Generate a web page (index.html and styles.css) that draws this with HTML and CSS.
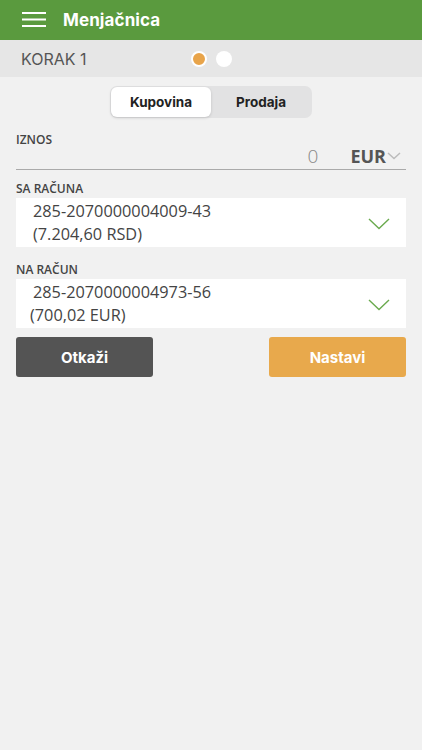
FILE: index.html
```html
<!DOCTYPE html>
<html lang="sr">
<head>
    <meta charset="UTF-8">
    <meta name="viewport" content="width=device-width, initial-scale=1.0">
    <title>Menjačnica</title>
    <link rel="stylesheet" href="styles.css">
</head>
<body>

    <header class="topbar">
        <svg class="menu-icon" width="24" height="16" viewBox="0 0 24 16">
            <rect x="0" y="0" width="24" height="2" fill="#fff"/>
            <rect x="0" y="6.5" width="24" height="2" fill="#fff"/>
            <rect x="0" y="13" width="24" height="2" fill="#fff"/>
        </svg>
        <h1 class="title">Menjačnica</h1>
    </header>

    <div class="stepbar">
        <span class="step-label">KORAK 1</span>
        <div class="dots">
            <span class="dot active"></span>
            <span class="dot"></span>
        </div>
    </div>

    <div class="segment-wrap">
        <div class="segment">
            <button class="seg-btn selected">Kupovina</button>
            <button class="seg-btn">Prodaja</button>
        </div>
    </div>

    <form class="exchange">
        <label class="field-label">IZNOS</label>
        <div class="amount-row">
            <span class="amount">0</span>
            <span class="currency">EUR</span>
            <svg class="currency-arrow" width="14" height="8" viewBox="0 0 14 8">
                <polyline points="1,1 7,6.5 13,1" fill="none" stroke="#bbb" stroke-width="1.5"/>
            </svg>
        </div>

        <label class="field-label">SA RAČUNA</label>
        <div class="account">
            <div class="account-text">
                <div>285-2070000004009-43</div>
                <div>(7.204,60 RSD)</div>
            </div>
            <svg class="account-arrow" width="22" height="12" viewBox="0 0 22 12">
                <polyline points="1,1 11,10.5 21,1" fill="none" stroke="#6aaa4e" stroke-width="1.4"/>
            </svg>
        </div>

        <label class="field-label">NA RAČUN</label>
        <div class="account">
            <div class="account-text">
                <div>285-2070000004973-56</div>
                <div class="shift">(700,02 EUR)</div>
            </div>
            <svg class="account-arrow" width="22" height="12" viewBox="0 0 22 12">
                <polyline points="1,1 11,10.5 21,1" fill="none" stroke="#6aaa4e" stroke-width="1.4"/>
            </svg>
        </div>

        <div class="actions">
            <button type="button" class="btn btn-cancel">Otkaži</button>
            <button type="button" class="btn btn-next">Nastavi</button>
        </div>
    </form>

</body>
</html>
```

FILE: styles.css
```css
body {
    margin: 0;
    background-color: #f1f1f1;
    font-family: "Open Sans", sans-serif;
    color: #444;
}
.topbar {
    height: 40px;
    background-color: #5a9a3e;
    display: flex;
    align-items: center;
    padding-left: 22px;
    box-sizing: border-box;
}
.menu-icon {
    margin-right: 17px;
}
.title {
    margin: 0;
    font-family: Inter, sans-serif;
    font-size: 17px;
    font-weight: 700;
    color: #fff;
    letter-spacing: 0.1px;
}
.stepbar {
    height: 37px;
    background-color: #e6e6e6;
    display: flex;
    align-items: center;
    padding-left: 21px;
}
.step-label {
    font-family: Inter, sans-serif;
    font-size: 16px;
    color: #555;
    width: 170px;
}
.dots {
    display: flex;
    gap: 9px;
    align-items: center;
}
.dot {
    width: 16px;
    height: 16px;
    border-radius: 50%;
    background-color: #fff;
    box-sizing: border-box;
}
.dot.active {
    background-color: #e8a44a;
    border: 2px solid #fff;
}
.segment-wrap {
    display: flex;
    justify-content: center;
    padding-top: 9px;
}
.segment {
    display: flex;
    width: 202px;
    height: 32px;
    padding: 1px;
    box-sizing: border-box;
    background-color: #e2e2e3;
    border-radius: 7px;
}
.seg-btn {
    flex: 1;
    border: none;
    background: none;
    font-family: Inter, sans-serif;
    font-size: 13.5px;
    font-weight: 700;
    color: #222;
    border-radius: 6px;
    padding: 0;
}
.seg-btn.selected {
    background-color: #fff;
    box-shadow: 0 1px 3px rgba(0, 0, 0, 0.15);
}
.exchange {
    padding: 0 16px;
}
.field-label {
    display: block;
    font-size: 12px;
    font-weight: 600;
    color: #444;
    line-height: 16px;
}
.exchange > .field-label:first-child {
    margin-top: 14px;
}
.amount-row {
    display: flex;
    align-items: center;
    justify-content: flex-end;
    height: 22px;
    box-sizing: border-box;
    padding-bottom: 5px;
    border-bottom: 1px solid #aaa;
    margin-bottom: 11px;
    padding-right: 5px;
}
.amount {
    font-size: 19px;
    font-weight: 300;
    color: #888;
    margin-right: 32px;
}
.currency {
    font-size: 18px;
    font-weight: 700;
    color: #555;
}
.currency-arrow {
    margin-left: 1px;
}
.account {
    display: flex;
    align-items: center;
    background-color: #fff;
    height: 49px;
    margin-top: 1px;
    margin-bottom: 15px;
    padding-left: 17px;
    padding-right: 16px;
}
.account-text {
    flex: 1;
    font-size: 16.3px;
    line-height: 22.5px;
    color: #444;
}
.account-text .shift {
    margin-left: -3px;
}
.account-arrow {
    margin-top: 2px;
}
.actions {
    display: flex;
    justify-content: space-between;
    margin-top: -6px;
}
.btn {
    width: 137px;
    height: 40px;
    border: none;
    border-radius: 3px;
    font-family: Inter, sans-serif;
    font-size: 15px;
    font-weight: 700;
    color: #fff;
}
.btn-cancel {
    background-color: #545454;
}
.btn-next {
    background-color: #e8a94c;
}
```
